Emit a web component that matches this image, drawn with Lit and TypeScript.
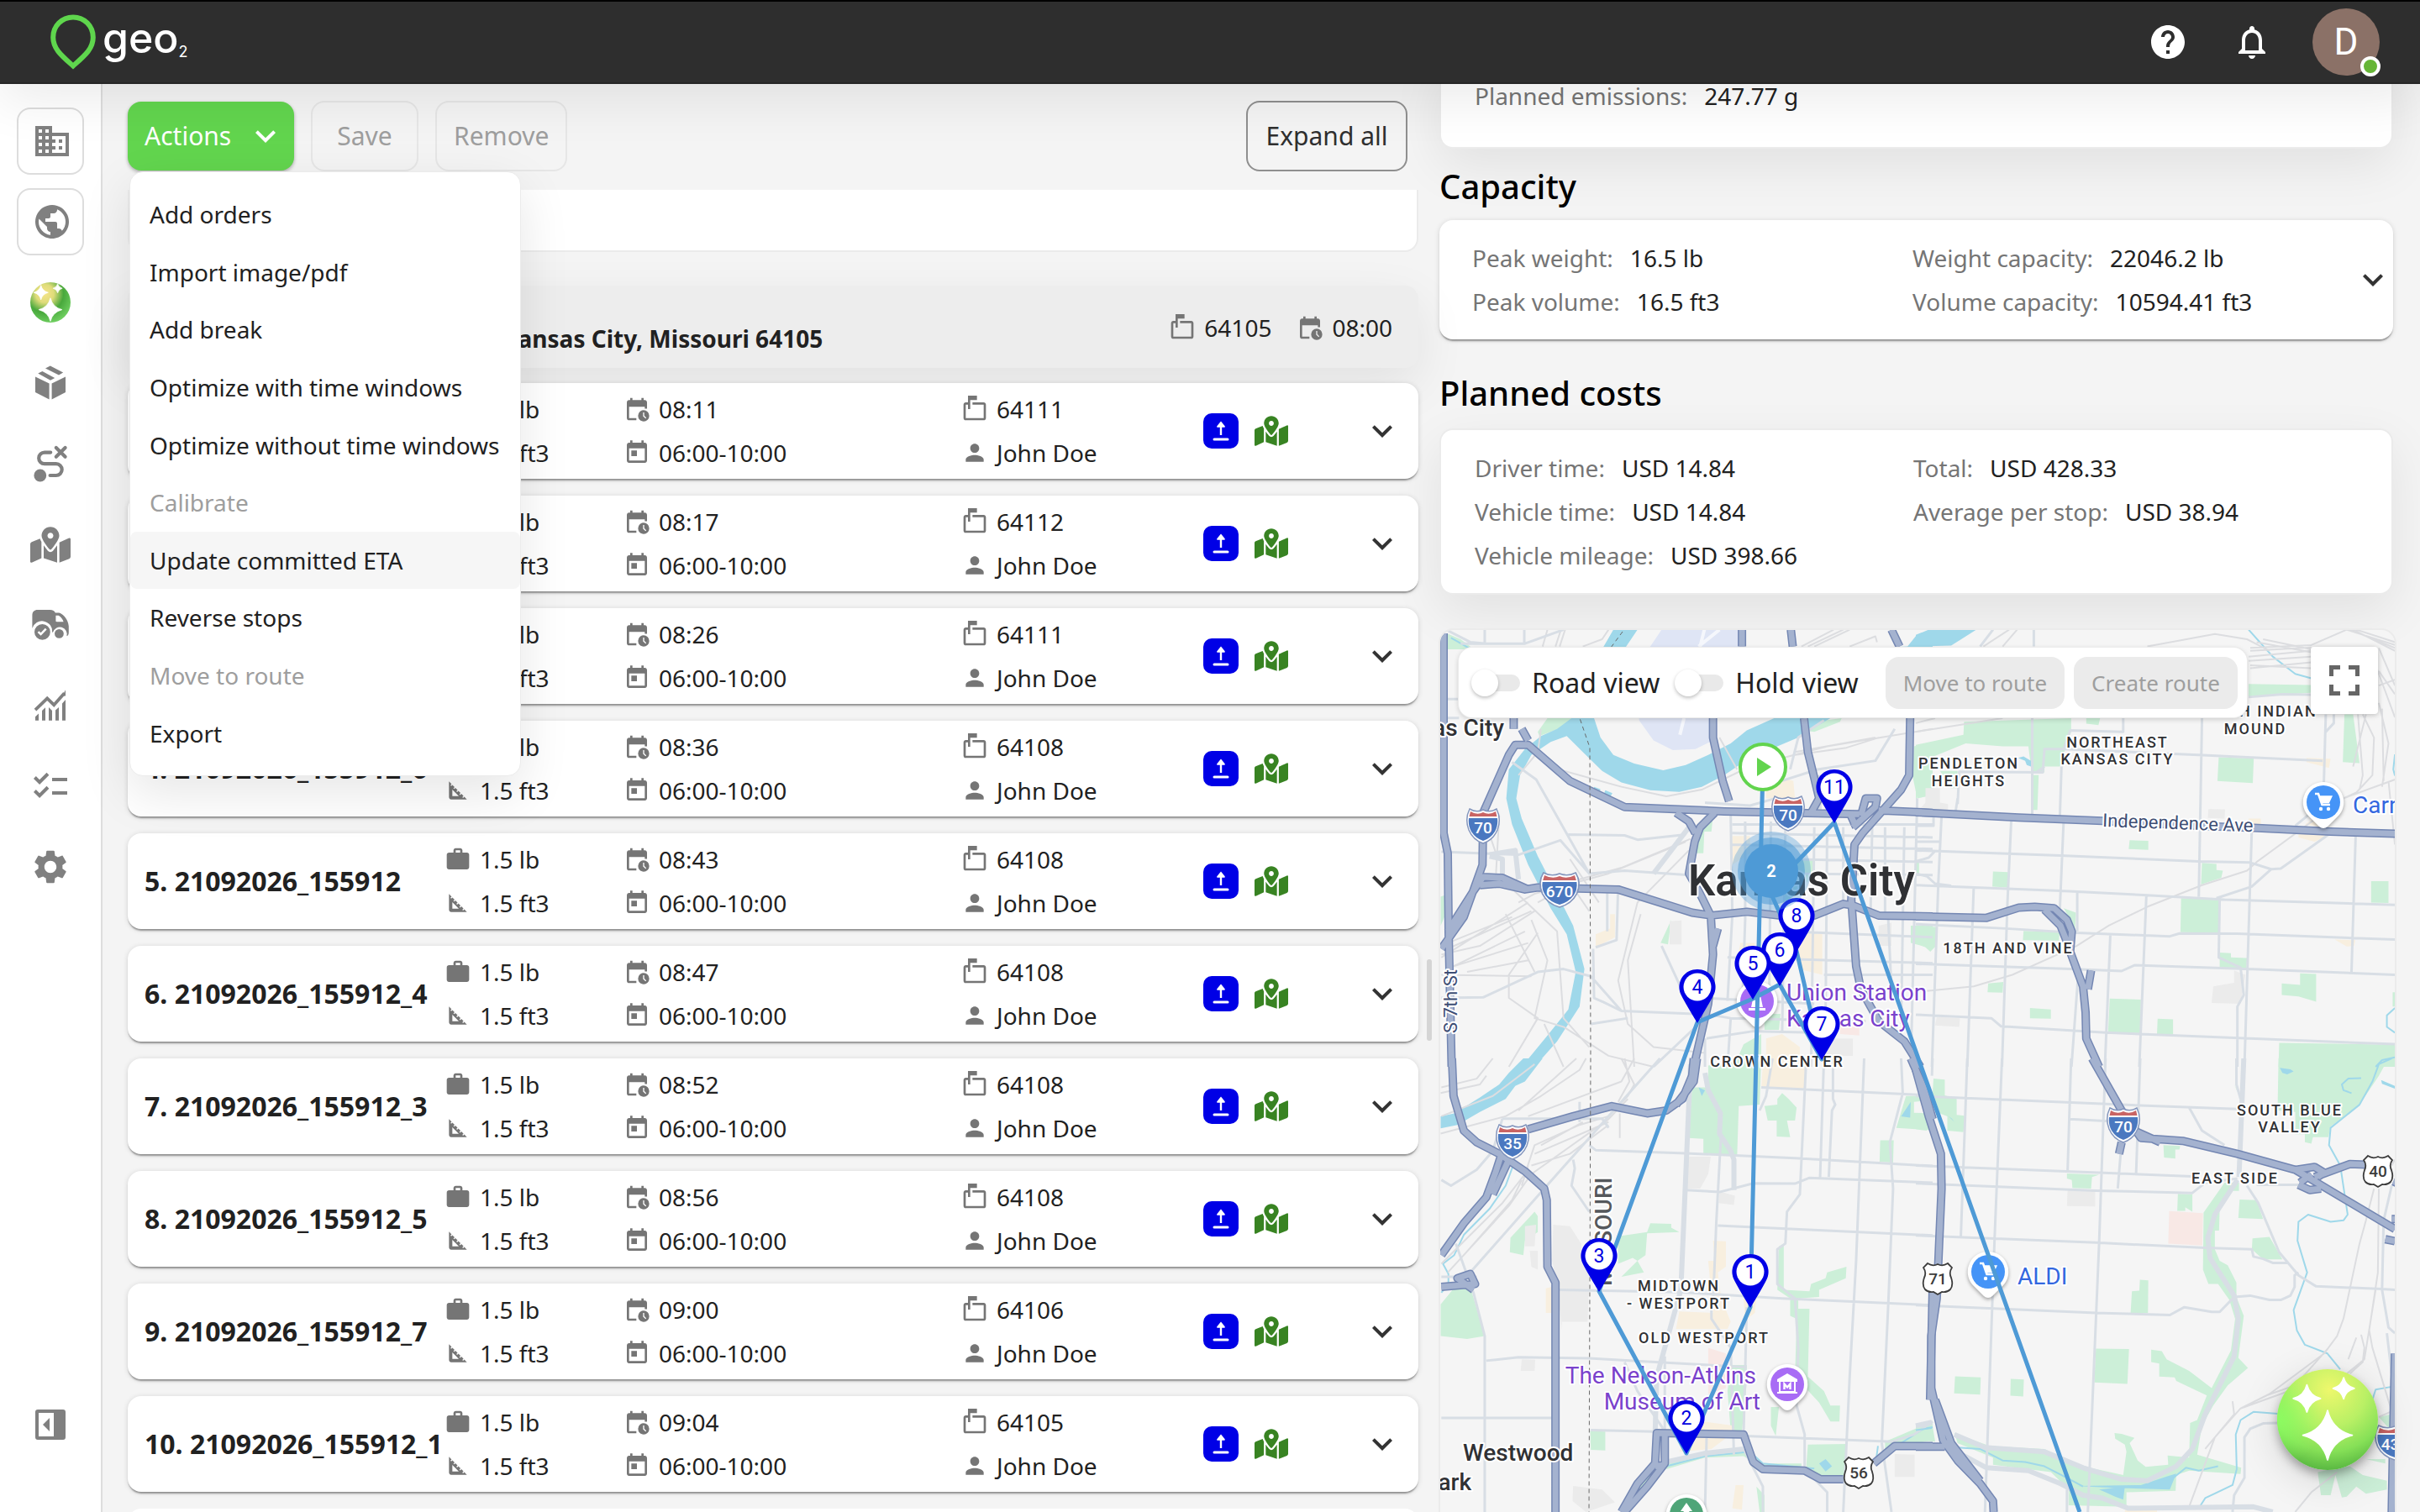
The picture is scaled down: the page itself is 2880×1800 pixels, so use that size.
import { LitElement, html, svg, css, nothing } from "lit";
import { customElement, property } from "lit/decorators.js";

/* ---------- icon paths, 24-unit grid unless a viewBox is given ---------- */

const ICONS: Record<string, unknown> = {
  building: svg`<path d="M12 7V3H2v18h20V7H12zM6 19H4v-2h2v2zm0-4H4v-2h2v2zm0-4H4V9h2v2zm0-4H4V5h2v2zm4 12H8v-2h2v2zm0-4H8v-2h2v2zm0-4H8V9h2v2zm0-4H8V5h2v2zm10 12h-8v-2h2v-2h-2v-2h2v-2h-2V9h8v10zm-2-8h-2v2h2v-2zm0 4h-2v2h2v-2z"/>`,
  globe: svg`<path d="M12 2C6.48 2 2 6.48 2 12s4.48 10 10 10 10-4.48 10-10S17.52 2 12 2zm-1 17.93c-3.95-.49-7-3.85-7-7.93 0-.62.08-1.21.21-1.79L9 15v1c0 1.1.9 2 2 2v1.93zm6.9-2.54c-.26-.81-1-1.39-1.9-1.39h-1v-3c0-.55-.45-1-1-1H8v-2h2c.55 0 1-.45 1-1V7h2c1.1 0 2-.9 2-2v-.41c2.93 1.19 5 4.06 5 7.41 0 2.08-.8 3.97-2.1 5.39z"/>`,
  box: svg`<path d="M3 8.2l8.3 4.1v9.5L3 17.5zM21 8.2l-8.2 4.1v9.5l8.2-4.3zM4.6 6.3L7.2 5l7.4 4-2.6 1.4zM9 3.3l2.9-1.5 7.7 4L17 7.3z"/>`,
  route: svg`<circle cx="5.9" cy="19" r="3.7"/><path fill="none" stroke="currentColor" stroke-width="2.1" stroke-linecap="round" d="M11.8 19H15.4a3.4 3.4 0 0 0 0-6.9H8.5a3.4 3.4 0 0 1 0-6.8h3.6M15.4 2.5l5.4 5.4M20.8 2.5l-5.4 5.4"/>`,
  truck: svg`<path d="M1.2 14V6.2c0-2 1.2-3.2 3.2-3.2h7.4c1.6 0 2.700.6 3.1 1.8h2.3c2.4.6 5.4 4 5.7 8v3.6c0 1.2-.4 2-1.2 2.2a4.2 4.2 0 0 0-8.2-2.2h-.4a6.1 6.1 0 0 0-11.9-2.4zM15.2 6.4v3.1c0 .4.2.6.6.6h4c-.6-1.7-1.6-3-3-3.7z"/><path fill-rule="evenodd" d="M7.2 11.5a4.7 4.7 0 1 0 0 9.4 4.7 4.7 0 0 0 0-9.4zm-.9 6.900l-2-1.900.9-.9 1.100 1 2.600-2.700.9.900z"/><circle cx="17.2" cy="17.2" r="2.7"/>`,
  chart: svg`<path fill="none" stroke="currentColor" stroke-width="1.9" d="M3 14.6l7.1-6.9 4 3.9L20.3 4.6"/><path d="M3 18.6l2-1.9v4.2H3zM7 15l2-1.9v7.8H7zM11 13l2 2v5.9h-2zM15 14.7l2-1.7v7.9h-2zM19 10.7l2-2.2v12.4h-2zM21 2.6v3.6l-1.9.1z"/>`,
  checklist: svg`<path d="M22 7h-9v2h9V7zm0 8h-9v2h9v-2zM5.54 11L2 7.46l1.41-1.41 2.12 2.12 4.24-4.24 1.41 1.41L5.54 11zm0 8L2 15.46l1.41-1.41 2.12 2.12 4.24-4.24 1.41 1.41L5.54 19z"/>`,
  gear: svg`<path d="M19.14 12.94c.04-.3.06-.61.06-.94 0-.32-.02-.64-.07-.94l2.03-1.58c.18-.14.23-.41.12-.61l-1.92-3.32c-.12-.22-.37-.29-.59-.22l-2.39.96c-.5-.38-1.03-.7-1.62-.94l-.36-2.54c-.04-.24-.24-.41-.48-.41h-3.84c-.24 0-.43.17-.47.41l-.36 2.54c-.59.24-1.13.57-1.62.94l-2.39-.96c-.22-.08-.47 0-.59.22L2.74 8.87c-.12.21-.08.47.12.61l2.03 1.58c-.05.3-.09.63-.09.94s.02.64.07.94l-2.03 1.58c-.18.14-.23.41-.12.61l1.92 3.32c.12.22.37.29.59.22l2.39-.96c.5.38 1.03.7 1.62.94l.36 2.54c.05.24.24.41.48.41h3.84c.24 0 .44-.17.47-.41l.36-2.54c.59-.24 1.13-.56 1.62-.94l2.39.96c.22.08.47 0 .59-.22l1.92-3.32c.12-.22.07-.47-.12-.61l-2.01-1.58zM12 15.6c-1.98 0-3.6-1.62-3.6-3.6s1.62-3.6 3.6-3.6 3.6 1.62 3.6 3.6-1.62 3.6-3.6 3.6z"/>`,
  panel: svg`<path fill-rule="evenodd" d="M4.5 3h15A1.5 1.5 0 0 1 21 4.5v15a1.5 1.5 0 0 1-1.5 1.5h-15A1.5 1.5 0 0 1 3 19.5v-15A1.5 1.5 0 0 1 4.5 3zM5 5v14h9V5zm6.5 3v8l-4-4z"/>`,
  help: svg`<path d="M12 2C6.48 2 2 6.48 2 12s4.48 10 10 10 10-4.48 10-10S17.52 2 12 2zm1 17h-2v-2h2v2zm2.07-7.75l-.9.92C13.45 12.9 13 13.5 13 15h-2v-.5c0-1.1.45-2.1 1.17-2.83l1.24-1.26c.37-.36.59-.86.59-1.41 0-1.1-.9-2-2-2s-2 .9-2 2H8c0-2.21 1.79-4 4-4s4 1.79 4 4c0 .88-.36 1.68-.93 2.25z"/>`,
  bell: svg`<path d="M12 22c1.1 0 2-.9 2-2h-4c0 1.1.9 2 2 2zm6-6v-5c0-3.07-1.63-5.64-4.5-6.32V4c0-.83-.67-1.5-1.5-1.5s-1.5.67-1.5 1.5v.68C7.64 5.36 6 7.92 6 11v5l-2 2v1h16v-1l-2-2zm-2 1H8v-6c0-2.48 1.51-4.5 4-4.5s4 2.02 4 4.5v6z"/>`,
  chevron: svg`<path d="M16.59 8.59L12 13.17 7.41 8.59 6 10l6 6 6-6z"/>`,
  work: svg`<path d="M20 6h-4V4c0-1.11-.89-2-2-2h-4c-1.11 0-2 .89-2 2v2H4c-1.11 0-1.99.89-1.99 2L2 19c0 1.11.89 2 2 2h16c1.11 0 2-.89 2-2V8c0-1.11-.89-2-2-2zm-6 0h-4V4h4v2z"/>`,
  volume: svg`<path d="M17.66 17.66l-1.06 1.06-.71-.71 1.06-1.06-1.94-1.94-1.06 1.06-.71-.71 1.06-1.06-1.94-1.94-1.06 1.06-.71-.71 1.06-1.06L9.7 9.7l-1.06 1.06-.71-.71 1.06-1.06-1.94-1.94-1.06 1.06-.71-.71 1.06-1.06L4 4v14c0 1.1.9 2 2 2h14l-2.34-2.34zM7 17v-5.76L12.76 17H7z"/>`,
  eta: svg`<path d="M19 4h-1V2h-2v2H8V2H6v2H5c-1.1 0-2 .9-2 2v14c0 1.1.9 2 2 2h6.5v-2H5V10h14v1.6h2V6c0-1.1-.9-2-2-2z"/><path fill-rule="evenodd" d="M18 13a5 5 0 1 0 0 10 5 5 0 0 0 0-10zm-.5 2h1v2.9l1.9 1.9-.7.7-2.2-2.2z"/>`,
  day: svg`<path d="M19 3h-1V1h-2v2H8V1H6v2H5c-1.11 0-1.99.9-1.99 2L3 19c0 1.1.89 2 2 2h14c1.1 0 2-.9 2-2V5c0-1.1-.9-2-2-2zm0 16H5V8h14v11zM7 10h5v5H7z"/>`,
  mailbox: svg`<path d="M20 6H10v2h10v12H4V8h2v4h2V4h6V0H6v6H4c-1.1 0-2 .9-2 2v12c0 1.1.9 2 2 2h16c1.1 0 2-.9 2-2V8c0-1.1-.9-2-2-2z"/>`,
  person: svg`<path d="M12 12c2.21 0 4-1.79 4-4s-1.79-4-4-4-4 1.79-4 4 1.79 4 4 4zm0 2c-2.67 0-8 1.34-8 4v2h16v-2c0-2.66-5.33-4-8-4z"/>`,
};

const icon = (name: string, cls = "i32") =>
  html`<svg class=${cls} viewBox="0 0 24 24" aria-hidden="true">${ICONS[name]}</svg>`;

const mapIcon = (cls: string) => html`<svg class=${cls} viewBox="0 0 576 512" aria-hidden="true">
  <path d="M288 0c-69.59 0-126 56.41-126 126 0 56.26 82.35 158.8 113.9 196.02 6.39 7.54 17.82 7.54 24.2 0C331.65 284.8 414 182.26 414 126 414 56.41 357.59 0 288 0zm0 168c-23.2 0-42-18.8-42-42s18.8-42 42-42 42 18.8 42 42-18.8 42-42 42zM20.12 215.95A32.006 32.006 0 0 0 0 245.66v250.32c0 11.32 11.43 19.06 21.94 14.86L160 448V214.92c-8.84-15.98-16.07-31.54-21.25-46.42L20.12 215.95zM288 359.67c-14.07 0-27.38-6.18-36.51-16.96-19.66-23.2-40.57-49.62-59.49-76.72v182l192 64V266c-18.92 27.09-39.82 53.52-59.49 76.72-9.13 10.77-22.44 16.95-36.51 16.95zm266.06-198.51L416 224v288l139.88-55.95A31.996 31.996 0 0 0 576 426.34V176.02c0-11.32-11.43-19.06-21.94-14.86z"/>
</svg>`;

const star = (x: number, y: number, r: number) => {
  const k = r * 0.2;
  return svg`<path fill="#fff" stroke="#fff" stroke-width="3" stroke-linejoin="round" d="M${x} ${y - r}Q${x + k} ${y - k} ${x + r} ${y}Q${x + k} ${y + k} ${x} ${y + r}Q${x - k} ${y + k} ${x - r} ${y}Q${x - k} ${y - k} ${x} ${y - r}z"/>`;
};

const navOrb = html`<svg class="i48" viewBox="-100 -100 200 200" aria-hidden="true">
  <defs><radialGradient id="orb-a" cx=".36" cy=".28" r=".75">
    <stop offset="0" stop-color="#f6e48a"/><stop offset=".3" stop-color="#dfdc7a"/><stop offset=".62" stop-color="#48a83c"/><stop offset="1" stop-color="#6fcf60"/>
  </radialGradient></defs>
  <circle r="100" fill="url(#orb-a)"/>${star(0, 36, 58)}${star(-47, -49, 36)}${star(36, -70, 23)}
</svg>`;

const fabOrb = html`<svg class="fab-art" viewBox="-100 -100 200 200" aria-hidden="true">
  <defs>
    <radialGradient id="orb-b" cx=".52" cy=".2" r=".82">
      <stop offset="0" stop-color="#eef86c"/><stop offset=".45" stop-color="#b9f065"/><stop offset=".75" stop-color="#86e057"/><stop offset="1" stop-color="#55b43f"/>
    </radialGradient>
    <radialGradient id="orb-c" cx="0" cy=".5" r=".45">
      <stop offset="0" stop-color="#8dff62" stop-opacity=".9"/><stop offset="1" stop-color="#8dff62" stop-opacity="0"/>
    </radialGradient>
  </defs>
  <circle r="100" fill="url(#orb-b)"/><circle r="100" fill="url(#orb-c)"/>${star(0, 31, 49)}${star(-41, -42, 27)}${star(32, -62, 21)}
</svg>`;

/* ---------- map geometry: four survey tiles sharing one pair of scales ---------- */

interface Tile {
  x: number; y: number;
  park: string; shop: string; block: string; clinic: string; water: string;
  stream: string; rail: string; street: string; avenue: string; highway: string;
}

const TILES: Tile[] = [
  {
    x: 1700, y: 730,
    park: "M57 70L100 90L130 115V125H57zM340 410L370 363H445L440 385L345 425zM1170 380L1285 363L1280 375L1200 410L1165 405zM1510 460L1568 445V630L1520 640L1505 560zM845 750L885 700L880 755H858L855 830H830zM755 1060L745 1145L722 1140zM1500 1080H1568V1160L1500 1140zM1045 1385H1095L1090 1440H1045zM980 1490L1035 1455V1568H950zM1110 850H1200V905L1110 1000zM38 980L50 975V1050L38 1080z",
    shop: "M945 770H1000V830L945 870zM1050 610L1090 565L1135 580L1140 640H1050zM520 1110L565 1090V1040H580V1120L520 1155zM970 1140H1015V1185L960 1200zM1150 1100L1225 1110V1250L1150 1230zM1050 1470L1100 1455L1155 1500V1568H1050z",
    block: "M750 1065L787 1062V1145H750zM1400 1080L1440 1070V1150H1400zM1225 1470H1320V1530H1225z",
    clinic: "M1280 1420L1340 1430V1460L1280 1455z",
    water: "M575 57H650L615 115L515 363L535 430L575 490L640 520L730 543L800 525L870 490L940 450L990 405L1075 363L1140 320L1400 120L1490 115L1515 80L1568 60V200L1250 363L1150 430L1000 500L920 560L850 600L780 618L690 612L600 585L540 545L480 480L430 425L380 445L320 490L285 560L273 640L290 710L340 840L400 970L450 1080L485 1230L470 1360L400 1480L330 1568H290L370 1460L435 1370L458 1240L430 1110L380 1020L310 870L260 730L242 640L250 540L300 470L350 425L400 400L445 363L545 115zM515 600L535 608L530 625L513 618zM550 612L572 622L565 635L545 627z",
    stream: "M70 85L125 120",
    rail: "M370 57L355 115M425 57L408 115M412 57L395 115M560 57L540 90L480 115M1160 115L1260 57M1180 115L1290 57M1200 115L1310 57M1310 115L1390 80L1395 100M405 540L600 600L740 633L850 610L1000 530L1240 460L1568 400M905 430L960 540M1140 490L1300 465L1400 430M1140 480L1390 430M40 1190L310 1000M60 1230L300 1100M40 1250L320 1255M330 1030L160 1150L40 1180M60 1160L320 1030M320 1060L370 1200L330 1400L420 1430L560 1530L700 1568M220 700L210 900L400 1100L420 1400L500 1500M800 790L560 900L330 970L280 1000M815 780L600 880L470 920L340 1000M810 820L650 1000L590 1270L620 1420L700 1500L860 1520M340 1105L250 1250V1330L340 1400L250 1568M440 850L530 1000M420 900L500 1030M350 400L340 480M230 540L170 700L210 830M80 1220L310 1140M60 1140L260 1050M120 1240L310 1200M660 1040L620 1200L640 1568M240 1040L330 1240M360 1420L420 1568M340 480L280 560",
    street: "M175 57V105M298 57V105M100 105H300L420 57M40 297H95M38 362H95M60 60L130 100L180 105M260 515L335 575L500 900L610 890L810 905M435 765L610 768L650 783L800 765M40 825L280 835L410 785L500 900M520 1155L585 1130L590 940M556 960V1100M512 1160L515 1330L545 1345L600 1375L825 1385M40 1330L170 1328L340 1240L420 1230L505 1255L600 1375M725 1150L800 1330M860 655L1000 665L1080 640M940 700L945 1045L930 1340M985 720V1060L975 1380M1065 720L1060 1300M1110 740L1100 1450M1200 740L1190 1568M1240 740L1235 1400M1290 740V1000M945 730H1568M945 760L1568 775M945 800L1568 815M1110 850L1568 860M1110 900L1568 905M930 1190L1568 1210M860 1330L1200 1350M830 1380L940 1400L1360 1410M865 1470L1010 1445L1200 1450M1380 740L1375 1040M1420 740V1040M1480 740L1470 1420M1520 640L1500 1568M1230 1250H1568M1070 590L1210 540L1390 510L1450 400M1125 540L1150 430L1230 370M505 1420L620 1400M700 1568L860 1400M1430 1060L1440 1300M860 1470V1568M940 1400L930 1568M1110 1100L1568 1120",
    avenue: "M810 740L700 900M190 835L270 820L280 920M230 930V850L190 840M1215 700V560",
    highway: "M47 70V760L60 830L63 1120L72 1568M170 690L250 490L270 455H310L440 580L610 670L920 685L1340 695M170 700L168 870L110 1050L40 1160M60 1100L140 960L170 912L230 915L310 955M160 940L220 935L300 955L340 948L590 955L820 1035L880 1045L990 1032L1090 1045H1200L1290 1005L1320 1010L1400 1045L1568 1048M885 363V430L915 580L935 650M975 57V115M1127 57L1133 115M1168 363L1180 480L1200 570L1215 640L1190 690M1440 57L1465 115M1498 363L1495 560L1470 610L1350 760L1325 800L1315 990L1330 1220L1345 1300L1400 1410L1480 1480L1530 1568M890 690L845 740L828 790L810 900L840 960L878 1045L885 1180L870 1350L825 1568M1400 682L1568 690M770 690L810 720L830 760M1345 700L1360 640L1395 640L1390 670L1320 740M900 1090L885 1150M1310 690L1330 740M310 440L290 400M265 363V400",
  },
  {
    x: 2280, y: 730,
    park: "M150 375L483 363V410L465 470L448 530H400V550H360L350 460H270L155 450L0 520V455L148 420zM75 545H130V605H110zM365 560H382L378 680H365zM0 530L20 520L0 660zM942 498L1051 502L1048 587L938 580zM665 785L723 787V818L662 815zM240 893L287 895L285 948L238 945zM890 863L935 867V888L955 890L950 915L887 938zM825 985L943 990V1105L823 1103zM1416 926H1470V1002L1416 1000zM335 1098L447 1103L445 1132L333 1130zM0 1080L65 1085L63 1150L45 1170L30 1155L0 1140zM225 1280L272 1275L270 1312L223 1310zM603 1332L700 1336L698 1452L598 1448zM355 1365L420 1370V1402L355 1400zM752 1402L800 1404V1460L750 1456zM945 1173L980 1175V1190L1030 1192L1028 1228L945 1225zM1195 1245L1245 1247V1343L1190 1325L1138 1320V1280L1195 1285zM1130 1485L1490 1492V1568H1128zM1035 245L1228 248V275L1035 290zM1333 350H1360L1380 518L1328 515zM530 363H573L568 387L530 382zM460 1020L498 1035L495 1100H485L475 1050zM0 860H10V900H0zM1483 1310H1490V1360H1483z",
    shop: "M1215 500L1290 503L1285 535L1215 515zM1035 710H1073V732H1030zM1190 755L1290 765L1240 790L1190 775zM1210 730L1250 700L1270 740zM1303 1128L1367 1130L1363 1150L1340 1152z",
    block: "M910 677L962 678L960 710L908 708zM990 1235L1025 1250L1010 1350L920 1347L925 1290L990 1278zM30 605H75V655L100 660V680H10L30 655zM65 1395L137 1400L135 1430L60 1425z",
    clinic: "",
    water: "M0 75L40 57H188L110 112L0 115zM318 500L335 495L358 510V530L345 525L340 510z",
    stream: "M1035 57L1110 150L1180 210L1230 225M1490 488L1485 540L1490 562M1490 1365L1465 1390V1430L1490 1450M1430 1568L1450 1545L1490 1535",
    rail: "M290 57L210 115M315 57L270 115M720 115L930 72L1030 90L1100 130M1040 120L1230 110L1340 57M1040 130L1230 118M1035 150L1230 130M1035 165L1230 150M1040 180L1230 190M1040 190L1230 170M1060 100L1230 135M1080 90L1230 125M1340 57L1490 110M1350 57L1490 120M1360 57L1490 130M1370 57L1490 100M1440 120L1490 250M1440 200L1490 280M1430 180L1490 360M1440 250L1490 230M1390 350L1425 430L1420 560L1370 620L1330 640M1440 310L1470 450L1450 600M1450 330L1455 580M1400 350L1360 530M1375 350L1390 560L1380 610M1490 575L1330 640L1060 860L1030 890L890 940L720 1015L600 1080L500 1150L300 1250L180 1290L40 1305H0M0 410L270 363M0 380L60 363M1470 580L1490 800",
    street: "M367 57V115M362 363V700M240 57L200 115M130 660L135 548L395 550L400 470H460L480 405L645 410V363M123 690L130 640M375 550L400 530M453 530L448 700M460 470L880 490L1265 510M890 363L880 980M1275 350L1265 740M1275 410L1300 380V350M1035 290L1140 280L1228 282M0 790H80M0 820L450 838L880 858L1040 862L1105 885L1135 883L1290 760M0 940L450 960L720 975L960 990L1490 1008M0 1075L280 1090L500 1105L790 1117L820 1107L1000 1108L1490 1128M0 1212L480 1230L640 1237L680 1217L1030 1230L1490 1250M0 1388L235 1400L265 1428L590 1450L1490 1490M80 700L70 930L50 1568M180 950L160 1568M297 710L285 1000L268 1568M460 710L448 1020M502 965V1100M505 1250L484 1568M605 1110L588 1568M717 975L695 1568M945 990L942 1190L1010 1225L1020 1320L1000 1360V1568M1045 745L1035 1100L1022 1568M1368 765L1355 1240M1105 885L1045 945L935 985M55 700V735H0M0 858L40 845L60 822M0 900L35 910L60 935L110 942M1180 735L1240 680",
    avenue: "",
    highway: "M0 688L320 706L580 718L870 735L1050 742L1290 755L1490 762M0 1048L220 1053L320 1018L370 1015L430 1020L470 1060L485 1100L480 1170L520 1290L528 1380L530 1470L570 1568M400 1025L450 1080L475 1150M545 1235L535 1300",
  },
  {
    x: 1700, y: 1260,
    park: "M870 25L1035 0L1030 160L965 165L960 335L855 328V278L808 275L820 100H870zM1045 165L1085 160V140L1100 120L1120 140L1145 170L1140 215H1115L1125 272L1083 270V215H1055zM1485 130H1568V145L1510 150V188L1568 190V248L1455 240zM1405 283H1447L1445 360L1403 357zM330 530L340 545V600L300 630L295 680L253 670L255 620zM38 850L75 800L130 790L175 960L120 970L38 960zM590 615L680 600L690 570L755 572V585L780 600L680 605L675 680L650 700L670 740L600 755L650 700L635 690L590 710zM1090 650L1105 640V800L1185 805L1190 780L1235 760L1240 740L1300 720L1298 760L1215 800V825L1150 830V865H1185L1180 1100L1230 1150L1250 1200H1280L1278 1255H1250L1215 1190L1140 1100L1145 900L1125 890V830L1085 800zM940 1060H990V1120L975 1290H940L930 1150zM503 1287L550 1290V1355L505 1353zM1180 1335L1300 1333V1440L1220 1445L1175 1410zM740 1390L990 1350L1040 1400H1160V1410L1040 1415L980 1375L860 1380L740 1420zM1065 1205H1090L1080 1305L1065 1270zM1420 1325L1568 1255V1320L1420 1350zM655 1470L690 1430V1450L620 1568H600zM1020 1480L1045 1510V1568H1030z",
    shop: "M1040 20L1175 0L1170 107L1035 100zM885 630L925 632V720L900 740L910 830L940 910L930 935H770L780 875L885 880L870 700H890zM980 830H1020L1015 880L985 905zM365 795L383 790V880H365zM820 1250L950 1270L940 1300L880 1350L780 1360zM955 1475H980L975 1560L945 1555z",
    block: "M805 340H878L870 400L845 450H805zM905 460L953 475L950 507L903 500zM388 575L440 580L475 640V700L500 750L495 910H415V940L400 780L385 700zM290 1040L332 1042L330 1080H287zM450 1478L540 1490L580 1535L490 1568L448 1530zM300 580L335 575L330 650H300zM315 665H340V730L320 720zM1450 1368L1512 1370V1447H1450z",
    clinic: "M870 1000L925 1020V1140L870 1160z",
    water: "M355 0L300 80L270 95L240 140L160 185L90 230L38 242V200L80 190L160 135L220 90L250 50L295 0zM1215 1400L1235 1385L1255 1410L1235 1428zM840 100L860 110L850 130zM1470 200L1500 150L1498 205z",
    stream: "M270 350L240 440L190 520L110 610L80 680L45 710L62 745V780L40 810M740 1410L860 1375L1000 1360L1040 1400L1200 1418M1420 1370L1470 1330L1540 1280L1568 1275M1398 1340L1392 1390",
    rail: "M38 260L240 200L350 130L470 40L490 0M40 100L150 70L200 0M38 120L160 90L180 60M40 200L200 130L330 20M280 180L400 60L460 0M310 200L600 80L640 0M600 0L640 90L620 130L560 200M610 0L625 80L590 150M60 740L250 510L320 400L560 210L620 140M40 710L230 500L300 400L330 300L470 230L560 200M330 330L560 220M350 300L480 220M320 370L440 330L560 230M595 275V190M290 440L310 370M110 680L260 490L290 420",
    street: "M500 300L520 317L800 328L1140 345L1568 372M800 455L905 462L1010 432L1140 433L1185 413L1568 430M900 578L1568 612M405 800L780 808L1100 830L1568 853M180 1045L280 1033L500 1037L740 1052L990 1067M40 1243H385M505 1285L700 1290M985 1305L1440 1325L1510 1300L1568 1255M1035 100L1568 128M1175 0L1155 470L1115 530L1110 640L1085 660V780L1140 830L1150 1000L1145 1200L1170 1300V1420L1240 1500V1568M1230 0L1218 410M1258 0V140L1265 160L1255 180L1245 410M1355 0L1330 700L1310 1100L1290 1568M1470 0L1475 120L1435 290L1445 450L1430 850L1410 1330L1440 1568M1070 0L1050 130L1030 180M990 860L980 1300M865 1310L860 1568M980 1350L1040 1480V1568M130 740L360 450L720 0M200 320L150 385L70 440L40 420M230 208H540L560 240M200 320L230 208M470 150V220M175 1568V960L140 810L85 640M450 350L455 380L445 440L500 530M610 1050L650 1150L730 1280M40 755H150M735 1030V1290M880 850V900L940 1000L950 1370M910 260L895 570L885 850",
    avenue: "M860 50L870 110L908 190L905 260L940 320L950 350V455M815 20L785 800L740 980L710 1100L705 1290M740 1395L860 1365L980 1350",
    highway: "M73 0L78 130L110 250L150 290L220 330L300 390L360 450L368 490L370 720L395 775V1568M825 0L820 60L790 140L740 180L680 190L570 165L450 200L310 245M230 320L210 390L180 480L110 570L40 680M250 350L200 470M835 0L825 80L770 160M1500 0L1540 100L1568 210M1568 800L1560 1180M1290 1455H1220L1170 1425L1040 1420L1010 1395L980 1300L710 1295L705 1400L650 1470L600 1568M735 1300V1400L680 1480L610 1568M705 1410L735 1405M1385 1400L1450 1340H1568M40 790L145 780L130 745L90 760L140 800",
  },
  {
    x: 2280, y: 1260,
    park: "M1128 0H1470L1440 60L1380 160L1290 235L1283 272H1235L1230 295L1210 290V262H1180V185L1125 180zM55 70L90 73V128L127 140V195L152 198L148 255L98 250V200L75 190L52 120zM0 215H30L35 250L0 245zM770 300L822 303L820 315H807V346L772 343zM1007 488L1060 490L1080 555L1003 552zM1047 622L1100 617L1140 695H1080L1045 660zM470 398L570 402L548 410L545 450L487 448L485 420L470 415zM815 468L860 470V530L838 515V527H813zM895 533L960 430H1005V458H985L945 520L943 595H930V660L945 700L970 715L997 775V825L1020 890L1003 1035L1033 1070L970 1130L925 1200L890 1270L875 1370L1012 1415L1010 1437L850 1425L810 1440L808 1495L655 1500V1550L475 1545V1490L420 1430L240 1405V1380L130 1330L120 1295L230 1340L400 1350L520 1410L645 1440L655 1360L650 1335L620 1315L618 1295L640 1298L680 1312L665 1330L690 1390L715 1412L785 1405L783 1373L850 1380L853 1260L875 1250L905 1165L810 1115L805 1103L757 1100V1055L732 1050V1007L765 1012L780 1040L850 1080L920 1140L980 1010L993 900L975 835L940 780H910L893 730zM697 765L723 767L722 880H668L672 805L695 803zM560 1003L663 1005L658 1125L555 1120zM122 1099L202 1103L200 1162L119 1158zM295 1108L336 1110L334 1169L294 1166zM0 1270L50 1255L60 1325L0 1320zM1250 1430L1290 1420L1350 1410L1390 1440L1465 1460V1490L1400 1505L1370 1480L1340 1515L1325 1518L1305 1440L1290 1510H1260zM1440 1240L1480 1230V1290zM1400 1385H1460V1400zM990 90L1005 120L1000 115z",
    shop: "M650 1560L750 1562V1568H650z",
    block: "M472 455L558 458V512L470 510z",
    clinic: "M788 528L893 535L891 647L785 640z",
    water: "M1132 33L1165 38L1175 45L1155 55L1140 50zM1447 75L1490 95V105L1450 88zM570 1490L650 1480L645 1525L620 1515L590 1500zM500 1478L700 1475L780 1445L810 1435L790 1490L600 1484zM100 198L112 208L120 220z",
    stream: "M1480 0L1440 20L1420 80L1380 160L1290 240L1285 300L1320 370L1343 540L1330 560L1290 565L1220 540L1190 565L1187 630L1217 740L1175 870L1185 940L1210 990L1280 1020L1320 1075M1355 120L1330 110L1325 90L1345 70L1385 68M880 1555L900 1520L985 1475L998 1420L995 1300L1010 1250L1050 1222L1125 1228M1480 1135L1430 1145L1420 1180M0 1285L50 1278M130 1345L200 1350L270 1390L340 1395L400 1410L470 1450L520 1480M790 1460L840 1415L880 1425L940 1410",
    rail: "M1425 450L1400 560L1380 640L1330 900L1310 960L1270 1020L1100 1160L1010 1210L930 1310L850 1550M1440 450L1437 740L1410 940L1420 1000L1480 1220M1430 800L1395 1040L1340 1090M1385 955L1395 1000L1390 1050L1350 1090M1345 1040L1370 965M1180 1568L1230 1500L1310 1430M1010 1210L1160 1150M1280 1005L1180 1130L1090 1165M1480 1220L1440 1240M985 1185L990 1230L900 1350M1490 350L1480 370",
    street: "M0 130L640 160L1000 175M480 210L600 217M0 370L860 408M0 432L560 457L860 465L900 430L1000 415M1060 437H1190M0 612L560 637L900 655L1045 660L1050 685L1080 693L1110 707H1155M0 853L560 880L790 887L835 860L920 876H945L990 825L1040 820L1100 835H1135L1165 820L1178 790V750L1190 740M52 0L50 60M160 0L140 615M268 0L245 620L215 1568M483 0L472 390M590 0L570 640L535 1568M698 0L685 400M640 290L628 450M997 0V90L1010 140M850 170L890 250L960 300M1030 440L1065 500L1130 670L1190 750L1245 788L1450 797L1490 800M1125 1260L1080 1262L1040 1280L1022 1310V1450L990 1510L985 1568M1480 440L1455 560L1450 800L1470 930L1490 950M1465 950L1480 1090M470 1490V1568",
    avenue: "M1020 0L1005 410M1000 420L930 540L908 620L915 690L990 820L1003 900L990 1030L900 1230L860 1350L810 1410L720 1460L640 1455L520 1415L400 1360L215 1345L120 1300M110 1350L220 1415L350 1425L450 1470L520 1510L580 1520L660 1555L1050 1550L1110 1568M0 1270L50 1258",
    highway: "M548 0L640 180L700 275L830 285L1000 330L1180 385L1490 590M690 255L760 290M640 290L632 330M1180 385L1240 375L1270 395L1250 410M1240 410L1350 365L1400 367M1190 437L1225 455L1260 450M1195 430L1230 400M0 40L40 200L78 330L80 450L65 830L48 960V1140L85 1320L130 1390L200 1470L240 1530L242 1568M60 1180L110 1330L200 1460M0 1342H90M1490 1020L1485 1280L1480 1568M1480 555H1490M1460 625L1490 632M1485 425L1495 430",
  },
];

const tileAt = (t: Tile) => `translate(${t.x} ${t.y}) scale(.38265 .34438)`;

const ROUTE = "M2098 913L2083 1556L2007 1730L1903 1537L2020 1217L2086 1189L2118 1172L2168 1261L2138 1132L2106 1060L2183 979L2475 1800";

const STOPS: [string, number, number][] = [
  ["8", 2138, 1090], ["6", 2118, 1131], ["5", 2086, 1147], ["7", 2168, 1219], ["4", 2020, 1175],
  ["11", 2183, 937], ["3", 1903, 1495], ["1", 2083, 1514], ["2", 2007, 1688],
];

const DISTRICTS: [string, number, number][] = [
  ["PENDLETON", 2343, 915], ["HEIGHTS", 2343, 936], ["NORTHEAST", 2520, 890], ["KANSAS CITY", 2520, 910],
  ["NORTH INDIAN", 2684, 853], ["MOUND", 2684, 874], ["18TH AND VINE", 2390, 1135], ["CROWN CENTER", 2115, 1270],
  ["SOUTH BLUE", 2725, 1328], ["VALLEY", 2725, 1348], ["EAST SIDE", 2660, 1409], ["MIDTOWN", 1998, 1537],
  ["- WESTPORT", 1998, 1558], ["OLD WESTPORT", 2028, 1599],
];

const cart = svg`<path fill="none" stroke="#fff" stroke-width="2.6" d="M-10-10h4l4.5 13h9.5M-5-6.5h14l-3 6.5h-9"/><path fill="#fff" d="M-5-7H9L6 0h-9z"/><circle cx="-3" cy="8" r="2.2" fill="#fff"/><circle cx="6" cy="8" r="2.2" fill="#fff"/>`;
const station = svg`<path fill="#fff" d="M-10 8h8V-1a2 2 0 0 1 4 0V8h8v3h-20zM-7 7l3-14h8L7 7z"/>`;
const museum = svg`<path fill="#fff" d="M0-13l12 7v3h-24v-3z"/><path fill="none" stroke="#fff" stroke-width="2" d="M-9-3V9H9V-3M-12 10H12"/><path fill="none" stroke="#fff" stroke-width="2.4" d="M-3.5 6V-.5L0 3.5 3.5-.5V6"/>`;
const tree = svg`<path fill="#fff" d="M0-14l7 10h-4l6 8H-9l6-8h-4z"/>`;

const poi = (x: number, y: number, color: string, glyph: unknown) => svg`<g transform="translate(${x} ${y})" class="poi">
  <path fill="#fff" d="M0-24A24 24 0 0 1 19 15L5 29a7 7 0 0 1-10 0L-19 15A24 24 0 0 1 0-24z"/><circle r="20" fill=${color}/>${glyph}</g>`;

const interstate = (label: string, x: number, y: number, wide = 1) => svg`<g transform="translate(${x} ${y})">
  <g transform="scale(${wide} 1)">
    <path fill="#fff" stroke="#8496bd" stroke-width="1.5" d="M-16-20Q-8-15 0-19 8-15 16-20 22-8 17 5 12 17 0 21-12 17-17 5-22-8-16-20z"/>
    <path fill="#4a78c0" d="M-17-9H17Q18 0 14 7 9 15 0 18-9 15-14 7-18 0-17-9z"/>
    <path fill="#c96464" d="M-15-17Q-7-12 0-16 7-12 15-17L16.5-11H-16.5z"/>
  </g>
  <text class="shield on" y="9">${label}</text></g>`;

const usRoute = (label: string, x: number, y: number) => svg`<g transform="translate(${x} ${y})">
  <path fill="#fff" stroke="#3c3c3c" stroke-width="1.8" d="M-12-18Q-6-14 0-17 6-14 12-18L17-13Q13-7 16-1 19 8 15 13 11 17 5 16L0 19-5 16Q-11 17-15 13-19 8-16-1-13-7-17-13z"/>
  <text class="shield" y="7">${label}</text></g>`;

const NAV: [string, string, boolean][] = [
  ["building", "Company", true], ["globe", "Region", true], ["orb", "Assistant", false], ["box", "Orders", false],
  ["route", "Planning", false], ["map", "Routes", false], ["truck", "Fleet", false], ["chart", "Reports", false],
  ["checklist", "Tasks", false], ["gear", "Settings", false],
];

const MENU: { label: string; off?: boolean; hot?: boolean }[] = [
  { label: "Add orders" }, { label: "Import image/pdf" }, { label: "Add break" },
  { label: "Optimize with time windows" }, { label: "Optimize without time windows" },
  { label: "Calibrate", off: true }, { label: "Update committed ETA", hot: true },
  { label: "Reverse stops" }, { label: "Move to route", off: true }, { label: "Export" },
];

const ROWS: [string, string, string][] = [
  ["21092026_155912_8", "08:11", "64111"], ["21092026_155912_9", "08:17", "64112"],
  ["21092026_155912_2", "08:26", "64111"], ["21092026_155912_6", "08:36", "64108"],
  ["21092026_155912", "08:43", "64108"], ["21092026_155912_4", "08:47", "64108"],
  ["21092026_155912_3", "08:52", "64108"], ["21092026_155912_5", "08:56", "64108"],
  ["21092026_155912_7", "09:00", "64106"], ["21092026_155912_1", "09:04", "64105"],
];

const shared = css`
  .i32, .i48 { fill: currentColor; flex: none; display: block; }
  .i32 { width: 32px; height: 32px; }
  .i48 { width: 48px; height: 48px; }
  button { font: inherit; color: inherit; background: none; border: 0; padding: 0; margin: 0; cursor: pointer; }
`;

@customElement("stop-card")
class StopCard extends LitElement {
  @property({ type: Number }) index = 0;
  @property() name = "";
  @property() eta = "";
  @property() zip = "";

  static styles = [shared, css`
    :host { display: block; }
    .card { display: grid; grid-template-columns: 357fr 213fr 402fr 288fr 189fr 48px; align-items: center; padding: 5px 19px 5px 20px; background: #fff; border-radius: 16px; box-shadow: 0 3px 2px -1px rgba(0,0,0,.36), 0 1px 6px rgba(0,0,0,.14); }
    .title { margin: 0; font-size: 32px; line-height: 52px; font-weight: 700; white-space: nowrap; }
    .facts { min-width: 0; }
    .fact { display: flex; align-items: center; gap: 10px; height: 52px; line-height: 52px; white-space: nowrap; }
    .fact svg { color: #757575; }
    .badges { display: flex; align-items: center; gap: 19px; }
    .type { width: 42px; height: 42px; display: block; }
    .green { width: 40px; height: 36px; fill: #388322; display: block; }
    .more { color: #333; }
  `];

  render() {
    const fact = (i: string, text: string) => html`<div class="fact">${icon(i)}<span>${text}</span></div>`;
    return html`<article class="card">
      <h3 class="title">${this.index}. ${this.name}</h3>
      <div class="facts">${fact("work", "1.5 lb")}${fact("volume", "1.5 ft3")}</div>
      <div class="facts">${fact("eta", this.eta)}${fact("day", "06:00-10:00")}</div>
      <div class="facts">${fact("mailbox", this.zip)}${fact("person", "John Doe")}</div>
      <div class="badges">
        <svg class="type" viewBox="0 0 42 42" aria-hidden="true"><rect width="42" height="42" rx="10" fill="#0000e6"/><path fill="#fff" d="M21 9.5l4.5 5.5q1.2 1.7-.5 1.7h-2.8V26h-2.4v-9.3H17q-1.7 0-.5-1.7z"/><rect x="11.5" y="29.5" width="19" height="3" rx="1.5" fill="#fff"/></svg>
        ${mapIcon("green")}
      </div>
      <button class="more" aria-label="Expand stop ${this.index}">${icon("chevron", "i48")}</button>
    </article>`;
  }
}

@customElement("route-map")
class RouteMap extends LitElement {
  static styles = [shared, css`
    :host { display: block; position: relative; overflow: hidden; border-radius: 16px 16px 0 0; background: #f5f5f5; box-shadow: 0 0 0 2px #ebebeb; }
    .canvas { display: block; width: 100%; height: 100%; font-family: Roboto, "Liberation Sans", sans-serif; }
    .tile path { vector-effect: non-scaling-stroke; }
    .park { fill: #ccefd8; } .shop { fill: #f8efdf; } .block { fill: #ebebeb; } .clinic { fill: #f8e8e5; } .water { fill: #9fd8ea; }
    .air { fill: #dfe5f5; }
    .runway { fill: none; stroke: #f5f7fc; stroke-width: 4px; }
    .line { fill: none; stroke-linejoin: round; }
    .stream { stroke: #9fd8ea; stroke-width: 2px; }
    .rail { stroke: #dcdde0; stroke-width: 2px; }
    .street { stroke: #d8dee5; stroke-width: 3px; }
    .avenue { stroke: #d8dee5; stroke-width: 6px; }
    .casing { stroke: #7487b3; stroke-width: 10px; }
    .highway { stroke: #a4b2cf; stroke-width: 7px; }
    .state { stroke: #6a6a6a; stroke-width: 1px; stroke-dasharray: 5 4; }
    text { paint-order: stroke; stroke: #fff; stroke-width: 4px; stroke-linejoin: round; fill: #303134; }
    .district { font-size: 18px; font-weight: 500; letter-spacing: 2px; text-anchor: middle; }
    .town { font-size: 28px; font-weight: 500; }
    .city { font-size: 51px; font-weight: 600; }
    .spot { font-size: 28px; fill: #7a42cc; }
    .shopname { fill: #3367df; }
    .road { font-size: 22px; fill: #3e4e74; }
    .region { font-size: 28px; font-weight: 500; fill: #55585c; }
    .shield { font-size: 19px; font-weight: 500; text-anchor: middle; stroke: none; fill: #3c3c3c; }
    .on { fill: #fff; }
    .end { text-anchor: end; }
    .poi { filter: drop-shadow(0 2px 2px rgba(0,0,0,.35)); }
    .num { font-size: 23px; fill: #0000e0; stroke: none; text-anchor: middle; }
    .cluster { font-size: 20px; font-weight: 700; fill: #fff; stroke: none; text-anchor: middle; }
    .trip { fill: none; stroke: #4e9ad6; stroke-width: 5px; stroke-linejoin: round; }
    .bar { position: absolute; top: 21px; left: 22px; display: flex; align-items: center; height: 83px; box-sizing: border-box; padding: 0 11px 0 15px; background: #fff; border-radius: 16px; box-shadow: 0 0 0 1px #ebebeb, 0 2px 6px rgba(0,0,0,.2); }
    .switch { display: flex; align-items: center; gap: 14px; margin-right: 18px; font-size: 32px; line-height: 48px; white-space: nowrap; }
    .switch input { appearance: none; position: relative; width: 58px; height: 36px; margin: 0; cursor: pointer; }
    .switch input::before { content: ""; position: absolute; inset: 8px 0 8px 8px; border-radius: 10px; background: #e9e9e9; }
    .switch input::after { content: ""; position: absolute; left: 0; top: 2px; width: 32px; height: 32px; border-radius: 50%; background: #fff; box-shadow: 0 2px 4px rgba(0,0,0,.25); }
    .bar button { height: 62px; padding: 0 21px; border-radius: 16px; background: #ebebeb; color: #9e9e9e; font-size: 26px; white-space: nowrap; }
    .first { margin: 0 11px 0 14px; }
    .full { position: absolute; top: 20px; right: 20px; width: 80px; height: 80px; border-radius: 4px; background: #fff; box-shadow: 0 1px 6px rgba(0,0,0,.25); display: grid; place-items: center; }
    .full svg { width: 36px; height: 36px; fill: none; stroke: #666; stroke-width: 5px; }
  `];

  render() {
    const shape = (kind: string, d: string) => (d ? svg`<path class=${kind} d=${d}/>` : nothing);
    const layer = (draw: (t: Tile) => unknown) =>
      TILES.map((t) => svg`<g class="tile" transform=${tileAt(t)}>${draw(t)}</g>`);
    return html`
      <svg class="canvas" viewBox="1714 750 1136 1050" preserveAspectRatio="xMinYMin slice" role="img" aria-label="Route map">
        <g class="tile" transform=${tileAt(TILES[0])}>
          <path class="air" d="M725 57H965L960 160L885 363V440L830 470L760 473L700 440L655 370L650 200L690 115z"/>
          <path class="runway" d="M858 57L845 115M905 57L840 115M795 363L782 420"/>
        </g>
        ${layer((t) => [shape("park", t.park), shape("shop", t.shop), shape("block", t.block), shape("clinic", t.clinic), shape("water", t.water)])}
        ${layer((t) => [shape("line stream", t.stream), shape("line rail", t.rail), shape("line street", t.street), shape("line avenue", t.avenue)])}
        ${layer((t) => shape("line casing", t.highway))}
        ${layer((t) => shape("line highway", t.highway))}
        <path class="line state" d="M1931 752L1914 775L1880 855L1892 890L1893 1260L1891 1800"/>
        ${interstate("70", 1765, 983)}${interstate("670", 1856, 1059, 1.2)}${interstate("70", 2128, 968)}
        ${interstate("35", 1800, 1359)}${interstate("70", 2527, 1339)}${interstate("435", 2850, 1717, 1.2)}
        ${usRoute("71", 2306, 1522)}${usRoute("40", 2830, 1394)}${usRoute("56", 2212, 1753)}
        ${DISTRICTS.map(([label, x, y]) => svg`<text class="district" x=${x} y=${y}>${label}</text>`)}
        <text class="town end" x="1790" y="876">Kansas City</text>
        <text class="city" x="2009" y="1066">Kansas City</text>
        <text class="town" x="1741" y="1739">Westwood</text>
        <text class="town end" x="1751" y="1774">Overland Park</text>
        <text class="road" transform="translate(2502 984) rotate(2)">Independence Ave</text>
        <text class="road" transform="translate(1734 1230) rotate(-90)">S 7th St</text>
        <text class="region" transform="translate(1918 1531) rotate(-90)">MISSOURI</text>
        <text class="spot" x="2126" y="1191">Union Station</text>
        <text class="spot" x="2126" y="1222">Kansas City</text>
        <text class="spot end" x="2090" y="1647">The Nelson-Atkins</text>
        <text class="spot end" x="2095" y="1678">Museum of Art</text>
        <text class="spot shopname" x="2401" y="1529">ALDI</text>
        <text class="spot shopname" x="2800" y="968">Carniceria</text>
        ${poi(2091, 1192, "#a86cf5", station)}${poi(2127, 1648, "#a86cf5", museum)}
        ${poi(2366, 1514, "#4594f7", cart)}${poi(2765, 955, "#4594f7", cart)}${poi(2007, 1803, "#4fa578", tree)}
        <path class="trip" d=${ROUTE}/>
        <circle cx="2098" cy="913" r="27" fill="#fff" stroke="#62d44e" stroke-width="4"/>
        <path fill="#62d44e" d="M2091 902L2108 913L2091 924z"/>
        ${STOPS.map(([n, x, y]) => svg`<g transform="translate(${x} ${y})">
          <path fill="#0000e6" d="M0-21A21 21 0 0 1 20 8Q17 15 0 43-17 15-20 8A21 21 0 0 1 0-21z"/><circle r="16.5" fill="#fff"/>
          <text class="num" y="8">${n}</text></g>`)}
        <g fill="#4e9ad6"><circle cx="2108" cy="1037" r="47" opacity=".35"/><circle cx="2108" cy="1037" r="40" opacity=".55"/><circle cx="2108" cy="1037" r="32"/></g>
        <text class="cluster" x="2108" y="1044">2</text>
      </svg>
      <div class="bar">
        <label class="switch"><input type="checkbox" role="switch" />Road view</label>
        <label class="switch"><input type="checkbox" role="switch" />Hold view</label>
        <button class="first" disabled>Move to route</button>
        <button disabled>Create route</button>
      </div>
      <button class="full" aria-label="Toggle fullscreen view"><svg viewBox="0 0 36 36" aria-hidden="true"><path d="M2.5 13V2.5H13M23 2.5H33.5V13M33.5 23V33.5H23M13 33.5H2.5V23"/></svg></button>`;
  }
}

@customElement("app-root")
class AppRoot extends LitElement {
  static styles = [shared, css`
    :host { display: grid; grid-template: 100px minmax(0, 1fr) / 122px minmax(0, 1fr); height: 100vh; overflow: hidden; background: #f4f4f4; color: #212121; font: 28px/52px "Noto Sans", sans-serif; }
    .top { grid-column: 1 / -1; z-index: 3; position: relative; box-sizing: border-box; display: flex; align-items: center; padding: 0 48px 0 60px; background: #2e2e2e; border-top: 2px solid #000; border-bottom: 2px solid #262626; box-shadow: 0 20px 60px rgba(0,0,0,.08); color: #fff; }
    .brand { display: flex; align-items: center; color: #fff; text-decoration: none; margin-right: auto; }
    .pin { width: 54px; height: 66px; display: block; }
    .word { margin: 0 0 10px 8px; font: 500 50px/66px Inter, sans-serif; }
    .word sub { font-size: 18px; font-weight: 400; line-height: 18px; vertical-align: -5px; }
    .top button { width: 48px; height: 48px; margin-right: 52px; }
    .top .avatar { position: relative; width: 80px; height: 80px; margin: 0; border-radius: 50%; background: #8b7167; font: 44px/80px Roboto, sans-serif; }
    .top .bell { margin-right: 48px; }
    .avatar i { position: absolute; right: -1px; bottom: -1px; width: 16px; height: 16px; border: 4px solid #fff; border-radius: 50%; background: #66b536; }
    .side { display: flex; flex-direction: column; align-items: center; gap: 16px; box-sizing: border-box; padding: 28px 0 64px; background: #fff; border-right: 2px solid #ddd; color: #808080; }
    .side button { width: 80px; height: 80px; display: grid; place-items: center; }
    .side .boxed { box-sizing: border-box; border: 2px solid #ddd; border-radius: 16px; padding-left: 4px; }
    .side .last { margin-top: auto; }
    .nav-map { width: 48px; height: 43px; fill: currentColor; display: block; }
    .main { display: grid; grid-template-columns: 1536fr 1136fr; gap: 26px; padding: 0 30px; min-height: 0; }
    .list { position: relative; padding-top: 20px; min-width: 0; min-height: 0; }
    .tools { display: flex; align-items: center; gap: 20px; height: 84px; font-size: 30px; line-height: 40px; }
    .tools button { box-sizing: border-box; height: 84px; padding: 0 20px; border: 2px solid #e6e6e6; border-radius: 16px; white-space: nowrap; color: #9e9e9e; min-width: 128px; }
    .tools .actions { display: flex; align-items: center; justify-content: space-between; width: 198px; height: 82px; padding: 0 10px 0 20px; border: 0; background: #62d54e; color: #fff; box-shadow: 0 2px 4px rgba(0,0,0,.3); }
    .tools .expand { margin: 0 13px 0 auto; min-width: 192px; border-color: #8f8f8f; color: #2f2f2f; }
    .menu { position: absolute; z-index: 2; top: 104px; left: 2px; width: 466px; box-sizing: border-box; padding: 16px 0; border: 1px solid #ebebeb; border-radius: 16px; background: #fff; box-shadow: 0 20px 60px rgba(0,0,0,.1); }
    .items { display: grid; grid-auto-rows: 1fr; height: 686px; margin: 0; padding: 0; list-style: none; }
    .items button { width: 100%; height: 100%; padding: 0 23px; text-align: left; white-space: nowrap; border-radius: 8px; color: #212121; line-height: 40px; }
    .items .hot { background: #f6f6f6; }
    .items .off { color: #9e9e9e; }
    .find { display: block; box-sizing: border-box; width: 100%; height: 74px; margin-top: 22px; padding: 0 20px; border: 2px solid #ebebeb; border-top: 0; border-radius: 0 0 16px 16px; background: #fff; font: inherit; outline: none; }
    .depot { display: flex; align-items: center; height: 98px; margin: 40px 0 18px; padding: 0 31px 0 446px; border-radius: 16px; background: #ededed; box-shadow: 0 20px 60px rgba(0,0,0,.08); }
    .where { align-self: flex-end; margin: 0 auto 16px 0; font-size: 28px; font-weight: 700; line-height: 38px; white-space: nowrap; }
    .tag { display: flex; align-items: center; gap: 10px; margin-left: 30px; padding-top: 2px; color: #212121; }
    .tag svg { color: #757575; }
    .stops { display: grid; gap: 20px; }
    .peek { height: 114px; border-radius: 16px; background: #fff; }
    .thumb { position: absolute; right: -16px; top: 1042px; width: 6px; height: 97px; border-radius: 3px; background: #d5d5d5; }
    .panel { display: flex; flex-direction: column; min-width: 0; min-height: 0; }
    .panel h2 { flex: none; margin: 44px 0 22px -1px; font-size: 40px; line-height: 40px; font-weight: 500; color: #000; }
    .panel .sheet + h2 { margin: 25px 0 20px -1px; }
    .sheet, .flat { flex: none; box-sizing: border-box; margin: 0 2px 0 -1px; background: #fff; border-radius: 16px; }
    .sheet { display: grid; grid-template-columns: 1fr 1fr; padding: 19px 47px 19px 40px; border: 2px solid #ebebeb; box-shadow: 0 20px 60px rgba(0,0,0,.08); }
    .sheet.cut { margin-top: -33px; padding-bottom: 35px; }
    .flat { display: flex; align-items: center; padding: 19px 0 19px 39px; box-shadow: 0 3px 2px -1px rgba(0,0,0,.36), 0 1px 6px rgba(0,0,0,.14); color: #333; }
    .pairs { flex: 1; display: grid; grid-template-columns: 1fr 1fr; }
    .pair { margin: 0; display: flex; gap: 20px; height: 52px; white-space: nowrap; }
    .pair dt { color: #757575; }
    .pair dd { margin: 0; color: #212121; }
    route-map { flex: 1; margin-top: 42px; min-height: 0; }
    .fab { position: absolute; z-index: 4; right: 50px; bottom: 50px; width: 120px; height: 120px; border-radius: 50%; box-shadow: 0 6px 12px rgba(0,0,0,.3), 0 10px 50px rgba(0,0,0,.14); }
    .fab-art { width: 120px; height: 120px; display: block; }
  `];

  render() {
    const pair = (k: string, v: string) => html`<dl class="pair"><dt>${k}:</dt><dd>${v}</dd></dl>`;
    return html`
      <header class="top">
        <a class="brand" href="#">
          <svg class="pin" viewBox="0 0 54 66" aria-hidden="true"><path fill="none" stroke="#5fd64d" stroke-width="6" d="M27 3.5C13.5 3.5 3.2 14 3.2 27.5 3.2 41 13 49 27 61.5 41 49 50.8 41 50.8 27.5 50.8 14 40.5 3.5 27 3.5z"/></svg>
          <span class="word">geo<sub>2</sub></span>
        </a>
        <button aria-label="Help">${icon("help", "i48")}</button>
        <button class="bell" aria-label="Notifications">${icon("bell", "i48")}</button>
        <button class="avatar">D<i></i></button>
      </header>
      <nav class="side">
        ${NAV.map(([name, label, boxed]) => html`<button class=${boxed ? "boxed" : ""} aria-label=${label}>
          ${name === "orb" ? navOrb : name === "map" ? mapIcon("nav-map") : icon(name, "i48")}</button>`)}
        <button class="last" aria-label="Toggle sidebar">${icon("panel", "i48")}</button>
      </nav>
      <main class="main">
        <section class="list">
          <div class="tools">
            <button class="actions" aria-haspopup="menu" aria-expanded="true">Actions${icon("chevron", "i48")}</button>
            <button disabled>Save</button>
            <button disabled>Remove</button>
            <button class="expand">Expand all</button>
          </div>
          <input class="find" type="text" aria-label="Search" />
          <div class="depot">
            <h3 class="where">Kansas City, Missouri 64105</h3>
            <span class="tag">${icon("mailbox")}64105</span>
            <span class="tag">${icon("eta")}08:00</span>
          </div>
          <div class="stops">
            ${ROWS.map(([name, eta, zip], i) => html`<stop-card .index=${i + 1} .name=${name} .eta=${eta} .zip=${zip}></stop-card>`)}
            <div class="peek"></div>
          </div>
          <div class="thumb"></div>
          <div class="menu">
            <ul class="items" role="menu">
              ${MENU.map((m) => html`<li role="none"><button role="menuitem" class=${m.off ? "off" : m.hot ? "hot" : ""} ?disabled=${m.off}>${m.label}</button></li>`)}
            </ul>
          </div>
        </section>
        <section class="panel">
          <div class="sheet cut">${pair("Planned emissions", "247.77 g")}</div>
          <h2>Capacity</h2>
          <div class="flat">
            <div class="pairs">
              ${pair("Peak weight", "16.5 lb")}${pair("Weight capacity", "22046.2 lb")}
              ${pair("Peak volume", "16.5 ft3")}${pair("Volume capacity", "10594.41 ft3")}
            </div>
            <button aria-label="Expand capacity">${icon("chevron", "i48")}</button>
          </div>
          <h2>Planned costs</h2>
          <div class="sheet">
            ${pair("Driver time", "USD 14.84")}${pair("Total", "USD 428.33")}
            ${pair("Vehicle time", "USD 14.84")}${pair("Average per stop", "USD 38.94")}
            ${pair("Vehicle mileage", "USD 398.66")}
          </div>
          <route-map></route-map>
        </section>
      </main>
      <button class="fab" aria-label="Open assistant">${fabOrb}</button>`;
  }
}
